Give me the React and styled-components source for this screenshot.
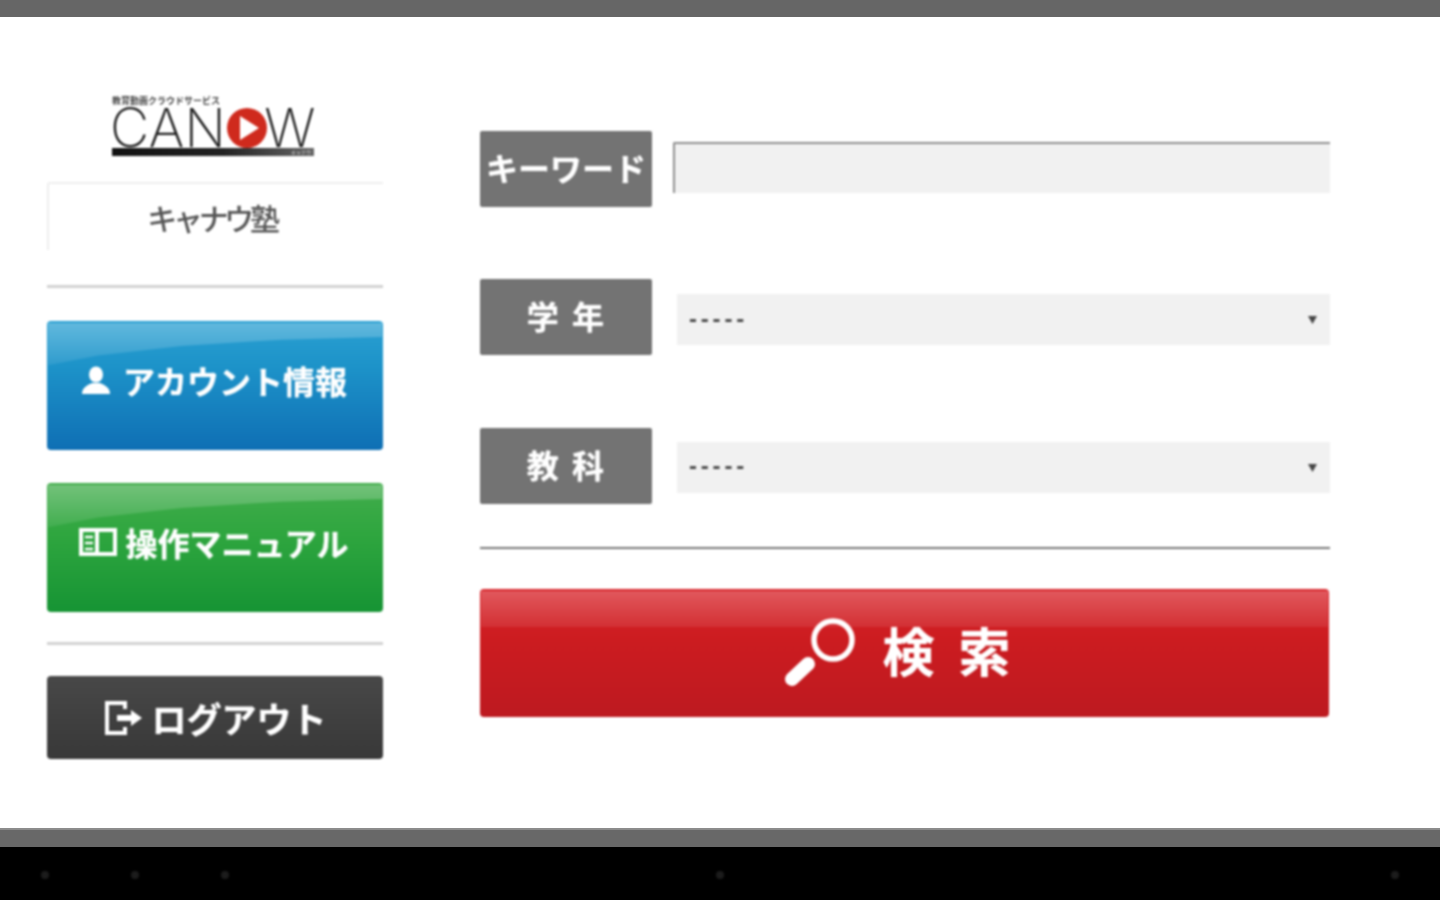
import React from "react";
import styled, { createGlobalStyle } from "styled-components";

const Global = createGlobalStyle`
  html, body { margin: 0; padding: 0; background: #fff; }
  * { box-sizing: border-box; }
  body { font-family: "Noto Sans CJK JP", "Liberation Sans", sans-serif; }
`;

const Screen = styled.div`
  width: 1440px;
  height: 900px;
  display: flex;
  flex-direction: column;
  overflow: hidden;
  background: #fff;
`;
const TopBar = styled.div`
  height: 17px;
  background: #666;
  flex: none;
`;
const Main = styled.main`
  flex: 1;
  display: flex;
  padding-left: 47px;
  filter: blur(0.9px);
`;
const BottomBar = styled.div`
  height: 19px;
  flex: none;
  background: #686868;
  border-top: 2px solid #8c8c8c;
`;
const NavBar = styled.nav`
  height: 53px;
  flex: none;
  background: #000;
  position: relative;
`;
const NavDot = styled.span`
  position: absolute;
  top: 24px;
  left: ${(p) => p.$x - 4}px;
  width: 8px;
  height: 8px;
  border-radius: 50%;
  background: #1c1c1c;
  filter: blur(1px);
`;

const Sidebar = styled.aside`
  width: 336px;
  flex: none;
  padding-top: 78px;
  display: flex;
  flex-direction: column;
`;
const Logo = styled.div`
  width: 202px;
  height: 61px;
  margin: 0 0 26px 65px;
  display: flex;
  flex-direction: column;
`;
const LogoTag = styled.div`
  font-size: 9px;
  line-height: 12px;
  height: 12px;
  font-weight: 700;
  color: #444;
  white-space: nowrap;
`;
const LogoWord = styled.div`
  height: 41px;
  margin-left: -2px;
  display: flex;
  align-items: center;
  font-family: Inter, "Liberation Sans", sans-serif;
  font-weight: 250;
  font-size: 54px;
  line-height: 41px;
  letter-spacing: 0.3px;
  color: #1a1a1a;
  & > svg { flex: none; margin: 0 -4px 0 0; }
`;
const LogoBar = styled.div`
  height: 8px;
  background: linear-gradient(90deg, #111 0%, #222 55%, #666 100%);
  color: #ddd;
  font-size: 5px;
  line-height: 8px;
  text-align: right;
  padding-right: 3px;
`;
const SchoolBox = styled.div`
  height: 68px;
  border-top: 2px solid #eee;
  border-left: 2px solid #eee;
  border-top-left-radius: 3px;
  display: flex;
  align-items: center;
  justify-content: center;
  font-size: 30px;
  font-weight: 500;
  letter-spacing: -4.3px;
  color: #555;
  padding: 0 9px 0 0;
`;
const SideRule = styled.hr`
  border: 0;
  margin: ${(p) => p.$top}px 0 ${(p) => p.$bottom}px;
  height: 3px;
  background: #d2d2d2;
  flex: none;
`;
const Gloss = styled.button`
  position: relative;
  overflow: hidden;
  display: flex;
  align-items: center;
  justify-content: center;
  width: 100%;
  border: 0;
  border-radius: 4px;
  color: #fff;
  font-family: inherit;
  font-weight: 700;
  white-space: nowrap;
  text-shadow: 0 0 1px #fff;
  & > * { position: relative; }
`;
const SideButton = styled(Gloss)`
  height: ${(p) => p.$h}px;
  margin-bottom: ${(p) => p.$mb || 0}px;
  padding: 0 ${(p) => p.$pr || 0}px ${(p) => p.$pb}px ${(p) => p.$pl || 0}px;
  font-size: ${(p) => p.$fs || 32}px;
  gap: ${(p) => p.$gap || 10}px;
  background: ${(p) => p.$bg};
  &::before {
    content: "";
    position: absolute;
    left: 1px;
    right: 1px;
    top: 2px;
    height: 44px;
    background: linear-gradient(180deg, rgba(255,255,255,.26), rgba(255,255,255,.07));
    clip-path: polygon(0 0, 100% 0, 100% 32%, 70% 38%, 40% 52%, 15% 74%, 0 96%);
    display: ${(p) => (p.$plain ? "none" : "block")};
  }
`;

const SearchForm = styled.form`
  width: 850px;
  margin-left: 97px;
  padding-top: 114px;
  display: flex;
  flex-direction: column;
  gap: 72.4px;
`;
const Row = styled.div`
  display: flex;
  align-items: flex-start;
  height: 76px;
`;
const Label = styled.label`
  width: 172px;
  height: 76px;
  flex: none;
  display: flex;
  align-items: center;
  justify-content: center;
  background: #737373;
  border-radius: 2px;
  color: #fff;
  font-size: 32px;
  font-weight: 700;
  white-space: pre;
  text-shadow: 0 0 1px #fff;
  letter-spacing: ${(p) => p.$ls || 0}px;
  padding: 0 0 4px ${(p) => p.$pl || 0}px;
`;
const TextInput = styled.input`
  display: block;
  width: 657px;
  height: 51px;
  margin: 11px 0 0 21px;
  border: 0;
  border-top: 2px solid #8f8f8f;
  border-left: 2px solid #8f8f8f;
  border-top-left-radius: 2px;
  background: #f1f1f1;
  outline: 0;
`;
const SelectWrap = styled.div`
  position: relative;
  width: 653px;
  height: 51px;
  margin: ${(p) => p.$top}px 0 0 25px;
  & > svg { position: absolute; right: 13px; top: 22px; }
`;
const Select = styled.select`
  appearance: none;
  display: block;
  width: 100%;
  height: 100%;
  border: 0;
  background: #f1f1f1;
  padding: 0 0 3px 12px;
  font-family: "Liberation Sans", sans-serif;
  font-size: 24px;
  font-weight: 700;
  letter-spacing: 3.8px;
  color: #444;
  outline: 0;
`;
const FormRule = styled.hr`
  border: 0;
  margin: -29.4px 0 0;
  height: 2px;
  background: #777;
`;
const SearchButton = styled(Gloss)`
  width: 849px;
  height: 128px;
  margin-top: -32px;
  padding: 0 8px 8px 0;
  gap: 26px;
  font-size: 52px;
  letter-spacing: 6px;
  background: linear-gradient(180deg, #d8242a 0%, #cc1c20 40%, #bd1a20 100%);
  white-space: pre;
  & > svg { margin-top: 6px; }
  &::before {
    content: "";
    position: absolute;
    left: 1px;
    right: 1px;
    top: 2px;
    height: 36px;
    background: linear-gradient(180deg, rgba(255,255,255,.24), rgba(255,255,255,.08));
  }
`;

const LOGO_PLAY = (
  <svg width="42" height="42" viewBox="0 0 42 42" aria-hidden="true">
    <circle cx="21" cy="21" r="20" fill="#cf2a1d" />
    <path d="M14 9 L33 21 L14 33 Z" fill="#fff" />
  </svg>
);

const UserIcon = () => (
  <svg width="30" height="30" viewBox="0 0 30 30" aria-hidden="true">
    <ellipse cx="15" cy="9.500" rx="7" ry="8" fill="#fff" />
    <path d="M1 29 C1 22 7 20 11 18 L19 18 C23 20 29 22 29 29 Z" fill="#fff" />
  </svg>
);
const BookIcon = () => (
  <svg width="38" height="30" viewBox="0 0 38 30" fill="none" stroke="#fff" strokeWidth="4" aria-hidden="true">
    <path d="M2 3 H18 V27 H2 Z M18 3 H36 V27 H18" />
    <path d="M6 10 H14 M6 16 H14 M6 22 H14" strokeWidth="2.500" />
  </svg>
);
const LogoutIcon = () => (
  <svg width="38" height="34" viewBox="0 0 38 34" fill="none" aria-hidden="true">
    <path d="M20 8 V2 H2 V32 H20 V26" stroke="#fff" strokeWidth="4" />
    <path d="M12 14 H26 V9 L37 17 L26 25 V20 H12 Z" fill="#fff" />
  </svg>
);
const SearchIcon = () => (
  <svg width="72" height="70" viewBox="0 0 72 70" fill="none" aria-hidden="true">
    <circle cx="48" cy="23" r="19" stroke="#fff" strokeWidth="5.500" />
    <path d="M7 62 L23 47" stroke="#fff" strokeWidth="14" strokeLinecap="round" />
  </svg>
);
const Caret = () => (
  <svg width="9" height="8" viewBox="0 0 9 8" aria-hidden="true">
    <path d="M0 0 H9 L4.500 8 Z" fill="#444" />
  </svg>
);

export default function App() {
  return (
    <>
      <Global />
      <Screen>
        <TopBar />
        <Main>
          <Sidebar>
            <Logo>
              <LogoTag>教育動画クラウドサービス</LogoTag>
              <LogoWord>CAN{LOGO_PLAY}W</LogoWord>
              <LogoBar>キャナウ</LogoBar>
            </Logo>
            <SchoolBox>キャナウ塾</SchoolBox>
            <SideRule $top={35} $bottom={33} />
            <SideButton type="button" $h={129} $mb={33} $pb={12} $pr={2} $gap={12} $bg="linear-gradient(180deg,#2aa0d2 0%,#1d93c9 35%,#0f6fb4 100%)">
              <UserIcon />
              <span>アカウント情報</span>
            </SideButton>
            <SideButton type="button" $h={129} $pb={12} $pr={2} $gap={8} $bg="linear-gradient(180deg,#42ad4c 0%,#2fa63f 40%,#169434 100%)">
              <BookIcon />
              <span>操作マニュアル</span>
            </SideButton>
            <SideRule $top={30} $bottom={31} />
            <SideButton type="button" $h={83} $plain $pb={0} $pl={2} $fs={35} $gap={8} $bg="linear-gradient(180deg,#484848,#383838)">
              <LogoutIcon />
              <span>ログアウト</span>
            </SideButton>
          </Sidebar>
          <SearchForm>
            <Row>
              <Label>キーワード</Label>
              <TextInput type="text" />
            </Row>
            <Row>
              <Label $ls={3} $pl={2}>学 年</Label>
              <SelectWrap $top={15}>
                <Select defaultValue="-----"><option>-----</option></Select>
                <Caret />
              </SelectWrap>
            </Row>
            <Row>
              <Label $ls={3} $pl={2}>教 科</Label>
              <SelectWrap $top={14}>
                <Select defaultValue="-----"><option>-----</option></Select>
                <Caret />
              </SelectWrap>
            </Row>
            <FormRule />
            <SearchButton type="button">
              <SearchIcon />
              <span>検 索</span>
            </SearchButton>
          </SearchForm>
        </Main>
        <BottomBar />
        <NavBar>
          {[45, 135, 225, 720, 1395].map((x) => (
            <NavDot key={x} $x={x} />
          ))}
        </NavBar>
      </Screen>
    </>
  );
}
